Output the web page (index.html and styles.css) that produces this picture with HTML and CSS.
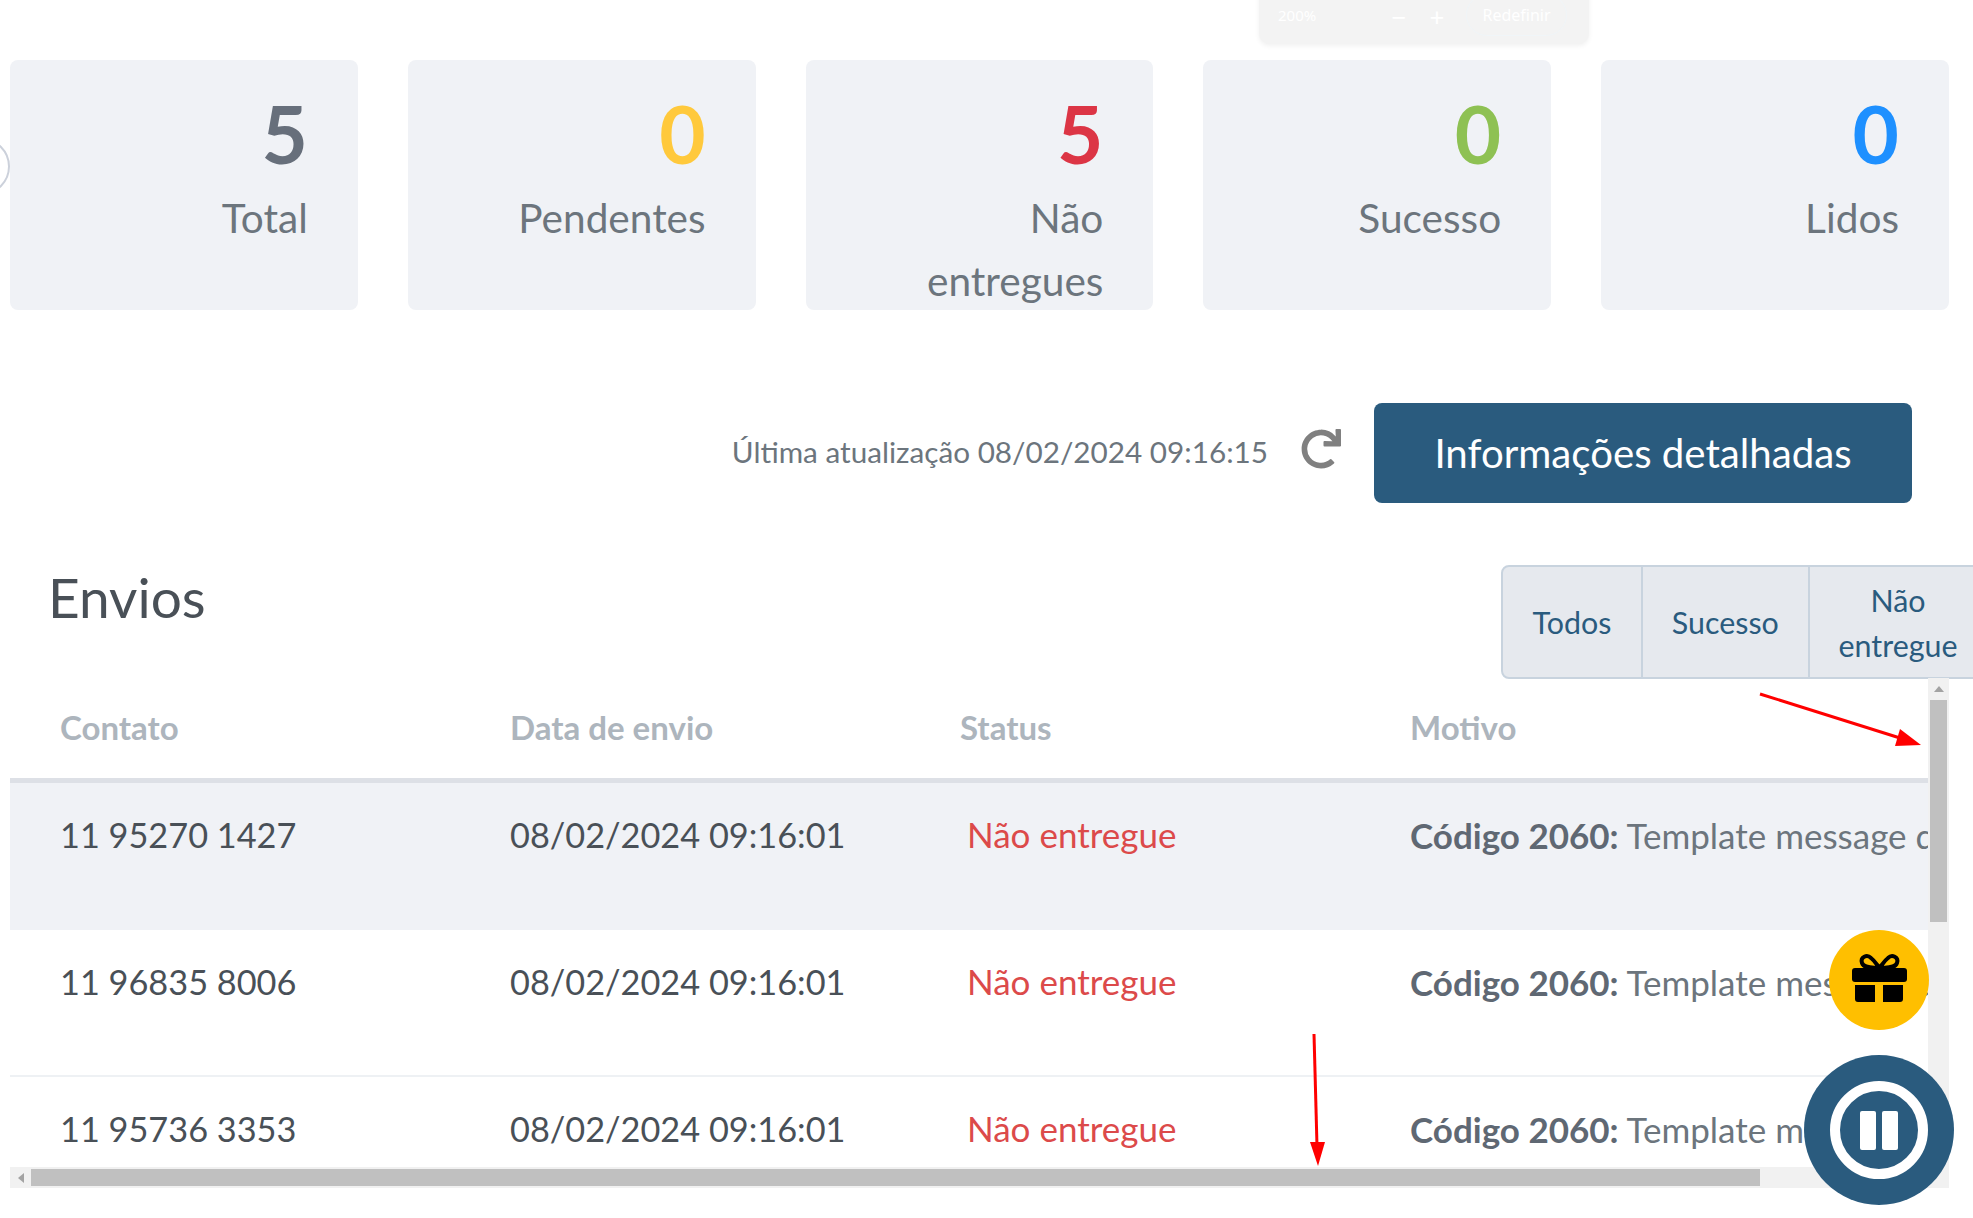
FILE: index.html
```html
<!DOCTYPE html>
<html lang="pt">
<head>
<meta charset="utf-8">
<title>Envios</title>
<link rel="stylesheet" href="styles.css">
</head>
<body>
<div class="zoom-bar"><span class="zoom-val">200%</span><span class="zoom-btn">−</span><span class="zoom-btn">+</span><span class="zoom-reset">Redefinir</span></div>
<div class="edge-circle"></div>
<main class="page">
  <section class="cards">
    <div class="card"><div class="num c-gray">5</div><div class="lab">Total</div></div>
    <div class="card"><div class="num c-yellow">0</div><div class="lab">Pendentes</div></div>
    <div class="card"><div class="num c-red">5</div><div class="lab">Não entregues</div></div>
    <div class="card"><div class="num c-green">0</div><div class="lab">Sucesso</div></div>
    <div class="card"><div class="num c-blue">0</div><div class="lab">Lidos</div></div>
  </section>
  <section class="update">
    <span class="update-text">Última atualização 08/02/2024 09:16:15</span>
    <svg class="refresh" viewBox="0 0 512 512"><path fill="#808080" d="M500.33 0h-47.41a12 12 0 0 0-12 12.57l4 82.76A247.42 247.42 0 0 0 256 8C119.34 8 7.9 119.53 8 256.19 8.1 393.07 119.1 504 256 504a247.1 247.1 0 0 0 166.18-63.91 12 12 0 0 0 .48-17.43l-34-34a12 12 0 0 0-16.38-.55A176 176 0 1 1 402.1 157.8l-101.53-4.87a12 12 0 0 0-12.57 12v47.41a12 12 0 0 0 12 12h200.33a12 12 0 0 0 12-12V12a12 12 0 0 0-12-12z"/></svg>
    <button class="detail-btn">Informações detalhadas</button>
  </section>
  <section class="head">
    <h2 class="title">Envios</h2>
    <div class="tabs">
      <div class="tab">Todos</div>
      <div class="tab">Sucesso</div>
      <div class="tab">Não entregue</div>
    </div>
  </section>
  <section class="table-box">
    <div class="table-view">
      <div class="row row-head"><div>Contato</div><div>Data de envio</div><div>Status</div><div>Motivo</div></div>
      <div class="row row-on"><div>11 95270 1427</div><div>08/02/2024 09:16:01</div><div class="st">Não entregue</div><div class="why"><b>Código 2060:</b> Template message did not match expected parameters</div></div>
      <div class="row"><div>11 96835 8006</div><div>08/02/2024 09:16:01</div><div class="st">Não entregue</div><div class="why"><b>Código 2060:</b> Template message did not match expected parameters</div></div>
      <div class="row"><div>11 95736 3353</div><div>08/02/2024 09:16:01</div><div class="st">Não entregue</div><div class="why"><b>Código 2060:</b> Template message did not match expected parameters</div></div>
    </div>
    <div class="vbar"><span class="arrow-up"></span><span class="vthumb"></span></div>
    <div class="hbar"><span class="arrow-left"></span><span class="hthumb"></span></div>
  </section>
</main>
<svg class="marks" viewBox="0 0 1973 1218" width="1973" height="1218">
  <line x1="1760" y1="694" x2="1900" y2="738" stroke="#f00" stroke-width="3"/>
  <polygon points="1921,745 1895,746 1900,729" fill="#f00"/>
  <line x1="1314" y1="1034" x2="1317" y2="1146" stroke="#f00" stroke-width="3"/>
  <polygon points="1318,1166 1310,1142 1325,1142" fill="#f00"/>
</svg>
<div class="fab-gift">
  <svg viewBox="9 5 100 100" width="100" height="100">
    <path fill="none" stroke="#000" stroke-width="4" d="M59.500 43C54 42 44 44 42 38C40 32 47 29 51 33C55 36 57 40 59.500 43C62 40 64 36 68 33C72 29 79 32 77 38C75 44 65 42 59.500 43Z"/>
    <rect x="32" y="43" width="55" height="14" rx="3" fill="#000"/>
    <path fill="#000" d="M35 60h20v17h-17a3 3 0 0 1-3-3zM63 60h20v14a3 3 0 0 1-3 3h-17z"/>
  </svg>
</div>
<div class="fab-pause"><span class="ring"><span class="bar"></span><span class="bar"></span></span></div>
</body>
</html>
```
FILE: styles.css
```css
* { box-sizing: border-box; }
html, body { margin: 0; height: 100%; overflow: hidden; background: #fff; }
body { font-family: Lato, "Liberation Sans", sans-serif; color: #495057; position: relative; width: 1973px; height: 1218px; }
.page { padding: 60px 0 0 10px; width: 1973px; }
.cards { display: grid; grid-template-columns: repeat(5, minmax(0, 1fr)); gap: 50px; width: 1939px; }
.card { height: 250px; background: #f0f2f6; border-radius: 8px; padding: 31px 50px 0 0; text-align: right; }
.num { font-size: 80px; line-height: 84px; font-weight: 700; }
.lab { font-size: 40.6px; line-height: 63px; color: #6c757d; padding-left: 60px; margin-top: 11px; }
.c-gray { color: #676f7b; } .c-yellow { color: #ffc93c; } .c-red { color: #dc3545; } .c-green { color: #8ec153; } .c-blue { color: #1e90ff; }
.update { display: flex; align-items: center; justify-content: flex-end; margin-top: 93px; height: 100px; padding-right: 61px; }
.update-text { font-size: 29.7px; color: #6c757d; position: relative; top: -2px; }
.refresh { width: 40px; height: 40px; margin: 0 33px 0 33px; position: relative; top: -4px; }
.detail-btn { width: 538px; height: 100px; background: #2a5b7e; color: #fff; font: 400 40.2px Lato, sans-serif; border: 0; border-radius: 8px; padding: 0 0 2px; }
.head { display: flex; justify-content: space-between; align-items: flex-start; margin-top: 62px; height: 113px; padding-left: 38px; }
.title { margin: 0; font-size: 55px; font-weight: 400; line-height: 65px; color: #495057; }
.tabs { display: flex; flex: none; height: 114px; margin-right: -15px; background: #e6e9ee; border: 2px solid #c8d3de; border-radius: 8px 0 0 8px; color: #2a5b7e; font-size: 30.4px; line-height: 45px; }
.tab { display: flex; align-items: center; justify-content: center; text-align: center; padding: 1px 29.2px 0; }
.tab + .tab { border-left: 2px solid #c8d3de; }
.tab:last-child { width: 178px; }
.table-box { position: relative; width: 1939px; height: 510px; }
.table-view { width: 1918px; height: 489px; overflow: hidden; }
.row { display: grid; grid-template-columns: 450px 450px 450px 1000px; width: 2400px; padding: 27px 0 0 50px; height: 147px; font-size: 34.3px; line-height: 50px; border-bottom: 2px solid #eef1f4; }
.row > div { white-space: nowrap; }
.row-head { height: 105px; padding-top: 24px; font-size: 33px; font-weight: 700; color: #adb5bd; border-bottom: 5px solid #dde0e6; }
.row-on { background: #f0f2f6; border-bottom: 0; }
.st { color: #dc4a4a; padding-left: 7px; font-size: 35px; margin-top: -1px; }
.why { color: #6c757d; font-size: 35px; }
.why b { color: #5f6873; }
.vbar { position: absolute; right: 0; top: 0; bottom: 21px; width: 21px; background: #f1f1f1; }
.vthumb { position: absolute; left: 2px; width: 17px; top: 22px; height: 222px; background: #c0c0c0; }
.arrow-up { position: absolute; left: 6px; top: 8px; border: 5px solid transparent; border-top: 0; border-bottom: 6px solid #a3a3a3; }
.hbar { position: absolute; left: 0; right: 0; bottom: 0; height: 21px; background: #f1f1f1; }
.hthumb { position: absolute; left: 21px; width: 1729px; top: 2px; height: 17px; background: #c0c0c0; }
.arrow-left { position: absolute; left: 8px; top: 6px; border: 5px solid transparent; border-left: 0; border-right: 6px solid #a3a3a3; }
.marks { position: absolute; left: 0; top: 0; pointer-events: none; }
.fab-gift { position: absolute; left: 1829px; top: 930px; width: 100px; height: 100px; border-radius: 50%; background: #ffbf00; }
.fab-gift svg { display: block; }
.fab-pause { position: absolute; left: 1804px; top: 1055px; width: 150px; height: 150px; border-radius: 50%; background: #2a5b7e; display: flex; align-items: center; justify-content: center; }
.ring { width: 98px; height: 98px; border-radius: 50%; border: 10px solid #fff; display: flex; align-items: center; justify-content: center; gap: 6px; }
.bar { width: 16px; height: 39px; border-radius: 2px; background: #fff; }
.zoom-bar { position: absolute; left: 1259px; top: -10px; width: 330px; height: 54px; background: #f3f3f3; border-radius: 0 0 10px 10px; box-shadow: 0 2px 5px rgba(0,0,0,.06); color: #fff; font: 15px "Noto Sans", sans-serif; display: flex; align-items: center; padding: 0 0 4px 19px; }
.zoom-val { width: 102px; }
.zoom-btn { width: 38px; text-align: center; font-size: 26px; line-height: 30px; position: relative; top: 2px; }
.zoom-reset { margin-left: 10px; width: 101px; height: 42px; border: 1px solid #f0f5f8; border-radius: 21px; text-align: center; line-height: 40px; font-size: 16px; }
.edge-circle { position: absolute; left: -47px; top: 138px; width: 57px; height: 57px; border-radius: 50%; border: 2px solid #ccd1db; }
```
